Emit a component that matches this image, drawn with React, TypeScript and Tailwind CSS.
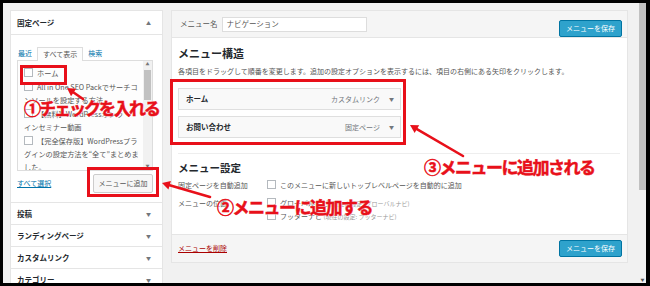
import React from "react";

const RED = "#e8101a";

function Check() {
  return <span className="inline-block w-[9px] h-[9px] border border-[#b4b9be] bg-white align-[-1px] mr-[4px]" />;
}

function Arrow({ x1, y1, x2, y2 }: { x1: number; y1: number; x2: number; y2: number }) {
  // 矢印の先端 (x2, y2)
  const len = Math.hypot(x2 - x1, y2 - y1);
  const dx = (x2 - x1) / len;
  const dy = (y2 - y1) / len;
  const bx = x2 - dx * 8;
  const by = y2 - dy * 8;
  const px = -dy * 4.5;
  const py = dx * 4.5;
  return (
    <g>
      <line x1={x1} y1={y1} x2={bx} y2={by} stroke={RED} strokeWidth={2.6} strokeLinecap="round" />
      <polygon points={`${x2},${y2} ${bx + px},${by + py} ${bx - px},${by - py}`} fill={RED} />
    </g>
  );
}

function AccordionRow({ label }: { label: string }) {
  return (
    <div className="h-[22px] flex items-center justify-between pl-[6px] pr-[11px] bg-white border-x border-b border-[#e5e5e5]">
      <span className="text-[7.5px] font-semibold text-[#23282d]">{label}</span>
      <span className="text-[5px] text-[#72777c]">▼</span>
    </div>
  );
}

function SaveButton() {
  return (
    <button className="h-[17px] w-[63px] rounded-[2px] bg-[#2ea2cc] border border-[#0074a2] text-white text-[7px] leading-none">
      メニューを保存
    </button>
  );
}

function MenuItem({ title, type }: { title: string; type: string }) {
  return (
    <div className="w-[223px] h-[22px] flex items-center border border-[#dfdfdf] bg-[#f9f9f9] pl-[7px] pr-[6px]">
      <span className="text-[7.5px] font-semibold text-[#23282d]">{title}</span>
      <span className="ml-auto text-[7px] text-[#72777c]">{type}</span>
      <span className="ml-[9px] text-[5px] text-[#72777c]">▼</span>
    </div>
  );
}

const note =
  "absolute text-[17px] leading-[21px] font-bold text-[#e8101a] whitespace-nowrap [-webkit-text-stroke:0.5px_#e8101a] [text-shadow:0_0_2px_#fff,0_0_2px_#fff]";

export default function App() {
  return (
    <div className="relative w-[650px] h-[286px] bg-black pt-[3px] pl-[3px] pr-[4px] pb-[3px] font-['Noto_Sans_CJK_JP',sans-serif] overflow-hidden">
      <div className="flex h-full bg-[#f1f1f1] overflow-hidden">
        <div className="flex-1 flex items-start gap-[8px] pt-[7px] pl-[7px]">
          {/* 左カラム */}
          <div className="w-[153px] flex flex-col">
            <div className="bg-white border border-[#e5e5e5]">
              <div className="h-[24px] flex items-center justify-between pl-[6px] pr-[11px] border-b border-[#e5e5e5]">
                <span className="text-[7.5px] font-semibold text-[#23282d]">固定ページ</span>
                <span className="text-[5px] text-[#72777c]">▲</span>
              </div>
              <div className="pl-[6px] pr-[9px] pt-[12px] pb-[9px]">
                <div className="flex items-end h-[13px] text-[7px]">
                  <span className="px-[1px] text-[#0073aa] mr-[4px] mb-[2px]">最近</span>
                  <span className="h-[14px] px-[5px] border border-b-0 border-[#ddd] bg-[#fdfdfd] text-[#555] -mb-px flex items-center">すべて表示</span>
                  <span className="ml-[5px] text-[#0073aa] mb-[2px]">検索</span>
                </div>
                <div className="h-[111px] border border-[#ddd] bg-[#fdfdfd] flex overflow-hidden">
                  <div className="flex-1 pl-[6px] pt-[6px] flex flex-col gap-[1px] text-[7.2px] leading-[13px] text-[#555] whitespace-nowrap">
                    <p><Check />ホーム</p>
                    <p><Check />All in One SEO Packでサーチコ<br />ンソールを設定する方法</p>
                    <p><Check />【無料】WordPressオンラ<br />インセミナー動画</p>
                    <p><Check />【完全保存版】WordPressプラ<br />グインの設定方法を“全て”まとめま<br />した。</p>
                  </div>
                  <div className="w-[9px] bg-[#f1f1f1] flex flex-col items-center">
                    <span className="text-[4px] leading-[7px] text-[#777]">▲</span>
                    <div className="w-[7px] h-[30px] bg-[#c1c1c1] mt-[2px]" />
                    <span className="mt-auto text-[4px] leading-[7px] text-[#777]">▼</span>
                  </div>
                </div>
                <div className="flex items-center justify-between mt-[3px]">
                  <span className="text-[7px] text-[#0073aa] underline">すべて選択</span>
                  <button className="h-[19px] w-[60px] rounded-[2px] border border-[#ccc] bg-[#f7f7f7] text-[7px] text-[#555]">
                    メニューに追加
                  </button>
                </div>
              </div>
            </div>
            <AccordionRow label="投稿" />
            <AccordionRow label="ランディングページ" />
            <AccordionRow label="カスタムリンク" />
            <AccordionRow label="カテゴリー" />
          </div>

          {/* 右パネル */}
          <div className="w-[457px] h-[253px] flex flex-col border border-[#e5e5e5] bg-white">
            <div className="h-[27px] flex items-center pl-[8px] pr-[5px] bg-[#f5f5f5] border-b border-[#e5e5e5]">
              <span className="text-[7.5px] text-[#555]">メニュー名</span>
              <div className="ml-[4px] w-[145px] h-[15px] border border-[#ddd] bg-white pl-[4px] flex items-center text-[7.5px] text-[#555]">
                ナビゲーション
              </div>
              <div className="ml-auto"><SaveButton /></div>
            </div>
            <div className="flex-1 pl-[6px] pt-[8px]">
              <p className="text-[11px] leading-[14px] font-bold text-[#23282d]">メニュー構造</p>
              <p className="mt-[6px] text-[7px] leading-[10px] text-[#555]">
                各項目をドラッグして順番を変更します。追加の設定オプションを表示するには、項目の右側にある矢印をクリックします。
              </p>
              <div className="mt-[12px] flex flex-col gap-[6px]">
                <MenuItem title="ホーム" type="カスタムリンク" />
                <MenuItem title="お問い合わせ" type="固定ページ" />
              </div>
              <div className="mt-[15px] mr-[7px] border-t border-[#eee] pt-[7px]">
                <p className="text-[10.5px] leading-[14px] font-bold text-[#23282d]">メニュー設定</p>
                <div className="mt-[5px] grid grid-cols-[89px_1fr] gap-y-[8px] text-[7px] leading-[10px] text-[#555]">
                  <span>固定ページを自動追加</span>
                  <span className="whitespace-nowrap"><Check />このメニューに新しいトップレベルページを自動的に追加</span>
                  <span>メニューの位置</span>
                  <div className="flex flex-col gap-[2px] whitespace-nowrap">
                    <span><Check />グローバルナビ <span className="text-[6px] text-[#999]">(現在の設定: グローバルナビ)</span></span>
                    <span><Check />フッターナビ <span className="text-[6px] text-[#999]">(現在の設定: フッターナビ)</span></span>
                  </div>
                </div>
              </div>
            </div>
            <div className="h-[28px] flex items-center justify-between pl-[6px] pr-[5px] bg-[#f5f5f5] border-t border-[#e5e5e5]">
              <span className="text-[7px] text-[#a00] underline">メニューを削除</span>
              <SaveButton />
            </div>
          </div>
        </div>

        {/* ウィンドウのスクロールバー */}
        <div className="w-[7px] bg-[#f1f1f1] flex flex-col">
          <div className="h-[187px] bg-[#c1c1c1]" />
          <span className="mt-auto text-[4px] leading-[6px] text-center text-[#555]">▼</span>
        </div>
      </div>

      {/* 注釈 */}
      <div className="absolute left-[20px] top-[65px] w-[47px] h-[20px] border-[3px] border-[#e8101a]" />
      <div className="absolute left-[87px] top-[167px] w-[72px] h-[30px] border-[3px] border-[#e8101a]" />
      <div className="absolute left-[170px] top-[79px] w-[236px] h-[66px] border-[3px] border-[#e8101a]" />
      <svg className="absolute left-0 top-0" width={650} height={286}>
        <Arrow x1={83} y1={99} x2={67} y2={88} />
        <Arrow x1={210} y1={197} x2={162} y2={183} />
        <Arrow x1={463} y1={156} x2={410} y2={125} />
      </svg>
      <span className={`${note} left-[24px] top-[97px] tracking-[-2px]`}>①チェックを入れる</span>
      <span className={`${note} left-[217px] top-[196px] tracking-[-1.5px]`}>②メニューに追加する</span>
      <span className={`${note} left-[424px] top-[156px] tracking-[-1.5px]`}>③メニューに追加される</span>
    </div>
  );
}
